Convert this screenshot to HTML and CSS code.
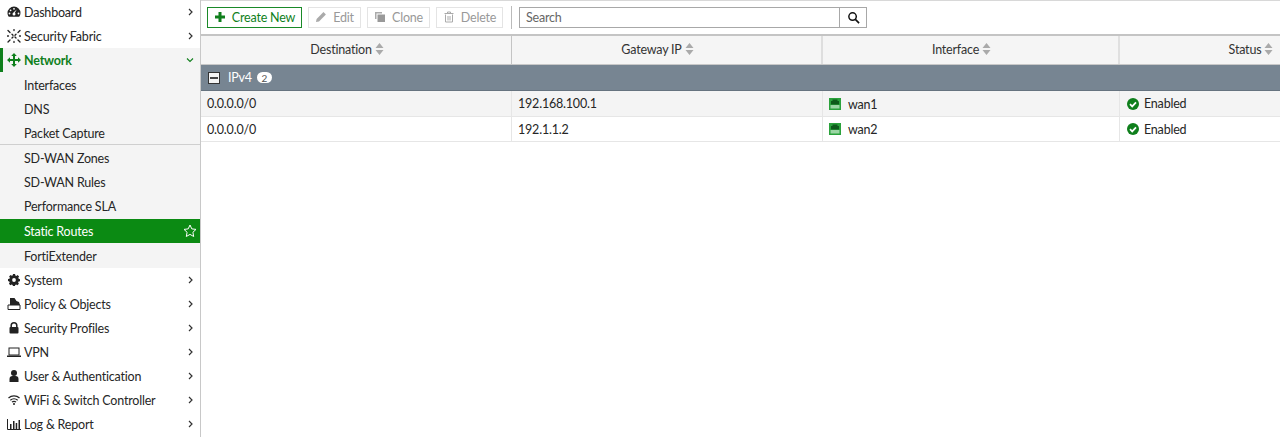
FILE: index.html
```html
<!DOCTYPE html>
<html lang="en">
<head>
<meta charset="utf-8">
<title>Static Routes</title>
<link rel="stylesheet" href="styles.css">
</head>
<body>
<div class="app">
  <nav class="side">
    <div class="item"><svg class="ic" viewBox="0 0 14 14"><path d="M7 1.500A6.500 6.500 0 0 0 .5 8c0 1.500.5 2.800 1.300 3.800h10.400A6.300 6.300 0 0 0 13.500 8 6.500 6.500 0 0 0 7 1.500z" fill="#222"/><circle cx="7" cy="3.800" r=".9" fill="#fff"/><circle cx="3.600" cy="5.300" r=".9" fill="#fff"/><circle cx="2.500" cy="8.500" r=".9" fill="#fff"/><circle cx="11.500" cy="8.500" r=".9" fill="#fff"/><path d="M9.800 4.500 7.600 8.200 6.400 7.600z" fill="#fff"/><circle cx="7" cy="9" r="1.500" fill="#fff"/></svg><span class="lbl">Dashboard</span><svg class="chev" viewBox="0 0 8 10"><path d="M3 2l3 3-3 3" fill="none" stroke="#333" stroke-width="1.200"/></svg></div>
    <div class="item"><svg class="ic" viewBox="0 0 14 14"><g stroke="#222" stroke-width="1.300" stroke-linecap="round"><path d="M1 1.500 3 3.500M5 5.300 6 6.300M8 8l1 1M11 11l2 2M13 1.500l-2 2M9 5.300 8 6.300M6 8 5 9M3 11l-2 2M7 .5v1M7 12.500v1M.5 7h1M12.500 7h1"/></g></svg><span class="lbl">Security Fabric</span><svg class="chev" viewBox="0 0 8 10"><path d="M3 2l3 3-3 3" fill="none" stroke="#333" stroke-width="1.200"/></svg></div>
    <div class="group">
      <div class="item open"><svg class="ic" viewBox="0 0 14 14"><path d="M7 0 9.800 3H8v3h3V4.200L14 7l-3 2.800V8H8v3h1.800L7 14l-2.800-3H6V8H3v1.800L0 7l3-2.800V6h3V3H4.200z" fill="#0f7f1c"/></svg><span class="lbl">Network</span><svg class="chev" viewBox="0 0 10 8"><path d="M2 2.500 5 5.500l3-3" fill="none" stroke="#0f7f1c" stroke-width="1.100"/></svg></div>
      <div class="sub">Interfaces</div>
      <div class="sub">DNS</div>
      <div class="sub">Packet Capture</div>
      <div class="rule"></div>
      <div class="sub">SD-WAN Zones</div>
      <div class="sub">SD-WAN Rules</div>
      <div class="sub">Performance SLA</div>
      <div class="sub active"><span class="lbl">Static Routes</span><svg class="star" viewBox="0 0 14 14"><path d="M7 1l1.800 3.900 4.200.5-3.100 2.900.8 4.200L7 10.400l-3.700 2.100.8-4.200L1 5.400l4.200-.5z" fill="none" stroke="#fff" stroke-width="1"/></svg></div>
      <div class="sub last">FortiExtender</div>
    </div>
    <div class="item"><svg class="ic sm" viewBox="0 0 14 14"><path d="M5.800 0h2.400l.4 1.700 1.100.5 1.500-.9 1.700 1.700-.9 1.500.5 1.100 1.500.4v2.400l-1.700.4-.5 1.100.9 1.500-1.700 1.700-1.500-.9-1.100.5-.4 1.700H5.800l-.4-1.700-1.100-.5-1.500.9-1.700-1.700.9-1.500-.5-1.100L0 8.200V5.800l1.700-.4.500-1.100-.9-1.500 1.700-1.700 1.500.9 1.100-.5z" fill="#222"/><circle cx="7" cy="7" r="2.200" fill="#fff"/></svg><span class="lbl">System</span><svg class="chev" viewBox="0 0 8 10"><path d="M3 2l3 3-3 3" fill="none" stroke="#333" stroke-width="1.200"/></svg></div>
    <div class="item"><svg class="ic" viewBox="0 0 14 14"><path d="M3 1h4.500l2 3 2.500 1 1 3H3z" fill="#222"/><path d="M1 8h12v4.500H1z" fill="#fff" stroke="#222" stroke-width="1"/></svg><span class="lbl">Policy &amp; Objects</span><svg class="chev" viewBox="0 0 8 10"><path d="M3 2l3 3-3 3" fill="none" stroke="#333" stroke-width="1.200"/></svg></div>
    <div class="item"><svg class="ic" viewBox="0 0 14 14"><path d="M4.200 6.500V4.500a2.800 2.800 0 0 1 5.600 0v2" fill="none" stroke="#222" stroke-width="1.500"/><rect x="2.500" y="6" width="9" height="6.500" rx="1" fill="#222"/></svg><span class="lbl">Security Profiles</span><svg class="chev" viewBox="0 0 8 10"><path d="M3 2l3 3-3 3" fill="none" stroke="#333" stroke-width="1.200"/></svg></div>
    <div class="item"><svg class="ic" viewBox="0 0 14 14"><rect x="2" y="3" width="10" height="7" fill="none" stroke="#222" stroke-width="1"/><path d="M0 10.500h14v1.500H0z" fill="#222"/></svg><span class="lbl">VPN</span><svg class="chev" viewBox="0 0 8 10"><path d="M3 2l3 3-3 3" fill="none" stroke="#333" stroke-width="1.200"/></svg></div>
    <div class="item"><svg class="ic" viewBox="0 0 14 14"><circle cx="7" cy="4" r="3" fill="#222"/><path d="M2.500 13V10a3 3 0 0 1 3-3h3a3 3 0 0 1 3 3v3z" fill="#222"/></svg><span class="lbl">User &amp; Authentication</span><svg class="chev" viewBox="0 0 8 10"><path d="M3 2l3 3-3 3" fill="none" stroke="#333" stroke-width="1.200"/></svg></div>
    <div class="item"><svg class="ic" viewBox="0 0 14 14"><g fill="none" stroke="#222" stroke-width="1.200"><path d="M1.500 5a8 8 0 0 1 11 0"/><path d="M3.300 7.200a5.500 5.500 0 0 1 7.400 0"/><path d="M5 9.200a2.800 2.800 0 0 1 4 0"/></g><circle cx="7" cy="11" r="1" fill="#222"/></svg><span class="lbl">WiFi &amp; Switch Controller</span><svg class="chev" viewBox="0 0 8 10"><path d="M3 2l3 3-3 3" fill="none" stroke="#333" stroke-width="1.200"/></svg></div>
    <div class="item"><svg class="ic" viewBox="0 0 14 14"><path d="M.5 2v10.500H14" fill="none" stroke="#222" stroke-width="1"/><path d="M3 7h1.500v5H3zM6 4h1.500v8H6zM8.700 6h1.500v6H8.700zM11.500 3H13v9h-1.500z" fill="#222"/></svg><span class="lbl">Log &amp; Report</span><svg class="chev" viewBox="0 0 8 10"><path d="M3 2l3 3-3 3" fill="none" stroke="#333" stroke-width="1.200"/></svg></div>
  </nav>
  <main class="main">
    <div class="toolbar">
      <button class="btn primary"><svg class="bi" viewBox="0 0 12 12"><path d="M4.500 1h3v3.500H11v3H7.500V11h-3V7.500H1v-3h3.500z" fill="#0f7f1c"/></svg>Create New</button>
      <button class="btn off edit"><svg class="bi" viewBox="0 0 12 12"><path d="M1 11l.6-3L8.500 1.100l2.400 2.400L4 10.400z" fill="#aaa"/></svg>Edit</button>
      <button class="btn off clone"><svg class="bi" viewBox="0 0 12 12"><path d="M1 1h7v1.500H2.500V8H1z" fill="#aaa"/><path d="M3.500 3.500H11V11H3.500z" fill="#999"/></svg>Clone</button>
      <button class="btn off del"><svg class="bi" viewBox="0 0 12 12"><path d="M1.500 2.500h9M4.500 2.500V1h3v1.500" fill="none" stroke="#aaa"/><path d="M2.500 3.500v7.500h7V3.500M5 5v4.500M7 5v4.500" fill="none" stroke="#aaa"/></svg>Delete</button>
      <span class="sep"></span>
      <div class="search"><span class="placeholder">Search</span><span class="go"><svg viewBox="0 0 14 14"><circle cx="6" cy="6" r="4" fill="none" stroke="#111" stroke-width="1.600"/><path d="M9 9l4 4" stroke="#111" stroke-width="1.800"/></svg></span></div>
    </div>
    <div class="table">
      <div class="row head">
        <div class="cell dark">Destination<svg class="sort" viewBox="0 0 8 12"><path d="M4 0l4 5H0zM4 12 0 7h8z" fill="#aaa"/></svg></div>
        <div class="cell">Gateway IP<svg class="sort" viewBox="0 0 8 12"><path d="M4 0l4 5H0zM4 12 0 7h8z" fill="#aaa"/></svg></div>
        <div class="cell">Interface<svg class="sort" viewBox="0 0 8 12"><path d="M4 0l4 5H0zM4 12 0 7h8z" fill="#aaa"/></svg></div>
        <div class="cell">Status<svg class="sort" viewBox="0 0 8 12"><path d="M4 0l4 5H0zM4 12 0 7h8z" fill="#aaa"/></svg></div>
      </div>
      <div class="grp"><span class="minus"><i></i></span><span class="grpname">IPv4</span><span class="count">2</span></div>
      <div class="row body shade">
        <div class="cell">0.0.0.0/0</div>
        <div class="cell">192.168.100.1</div>
        <div class="cell"><svg class="port" viewBox="0 0 12 12"><rect width="12" height="12" fill="#2ba23c"/><path d="M3.500 1.500h5V3H10v3.500H2V3h1.500z" fill="#0d5a1a"/><path d="M1.500 7h9v3.500h-9z" fill="#9bd6a4"/></svg><span class="portname">wan1</span></div>
        <div class="cell"><svg class="ok" viewBox="0 0 12 12"><circle cx="6" cy="6" r="6" fill="#0f7f1c"/><path d="M3 6.200 5.200 8.400 9 4.300" fill="none" stroke="#fff" stroke-width="1.700"/></svg>Enabled</div>
      </div>
      <div class="row body">
        <div class="cell">0.0.0.0/0</div>
        <div class="cell">192.1.1.2</div>
        <div class="cell"><svg class="port" viewBox="0 0 12 12"><rect width="12" height="12" fill="#2ba23c"/><path d="M3.500 1.500h5V3H10v3.500H2V3h1.500z" fill="#0d5a1a"/><path d="M1.500 7h9v3.500h-9z" fill="#9bd6a4"/></svg><span class="portname">wan2</span></div>
        <div class="cell"><svg class="ok" viewBox="0 0 12 12"><circle cx="6" cy="6" r="6" fill="#0f7f1c"/><path d="M3 6.200 5.200 8.400 9 4.300" fill="none" stroke="#fff" stroke-width="1.700"/></svg>Enabled</div>
      </div>
    </div>
  </main>
</div>
</body>
</html>
```

FILE: styles.css
```css
* { box-sizing: border-box; }
html, body { margin: 0; height: 100%; overflow: hidden; }
body { font-family: Lato, "Open Sans", sans-serif; font-size: 12.5px; letter-spacing: -0.2px; color: #262626; background: #fff; }
.app { display: flex; height: 437px; }

.side { width: 201px; flex: none; border-right: 1px solid #c8c8c8; overflow: hidden; }
.item { height: 24px; display: flex; align-items: center; padding-left: 7px; position: relative; }
.ic { width: 14px; height: 14px; flex: none; margin-right: 3px; }
.ic.sm { width: 12px; height: 12px; margin: 0 4px 0 1px; }
.lbl { flex: 1; }
.chev { width: 8px; height: 10px; margin-right: 6px; flex: none; }
.group { background: #f4f4f4; }
.open { color: #0f7f1c; font-weight: 700; box-shadow: inset 3px 0 0 #0f7f1c; }
.open .chev { width: 10px; height: 8px; margin-right: 5px; }
.sub { height: 24px; line-height: 22px; padding: 3px 0 0 24px; }
.sub.last { padding-top: 2px; }
.rule { height: 1px; background: #cfcfcf; }
.sub.active { height: 24px; margin: 2px 0 1px; padding-top: 1px; padding-right: 3px; line-height: 24px; background: #0b8a13; color: #fff; display: flex; align-items: center; }
.star { width: 14px; height: 14px; flex: none; margin-top: -1px; }

.main { flex: 1; min-width: 0; overflow: hidden; }
.toolbar { height: 36px; display: flex; align-items: center; padding: 0 0 1px 6px; border-top: 1px solid #d8d8d8; border-bottom: 2px solid #c4c4c4; }
.btn { height: 21px; padding: 0; margin: 0 6px 0 0; display: flex; align-items: center; justify-content: center; gap: 6px; font: inherit; letter-spacing: inherit; white-space: nowrap; background: #fff; border: 1px solid #e4e4e4; color: #999; }
.btn.primary { width: 95px; border-color: #1a8a28; color: #0f7f1c; margin-right: 6px; }
.btn.edit { width: 53px; }
.btn.clone { width: 63px; }
.btn.del { width: 67px; }
.bi { width: 12px; height: 12px; flex: none; }
.sep { width: 1px; height: 23px; background: #bbb; margin: 0 7px 0 2px; }
.search { width: 348px; height: 21px; border: 1px solid #a8a8a8; display: flex; align-items: center; }
.placeholder { flex: 1; padding-left: 6px; color: #666; }
.go { width: 27px; height: 100%; border-left: 1px solid #a8a8a8; display: flex; align-items: center; justify-content: center; }
.go svg { width: 13px; height: 13px; }

.table { width: 1201px; }
.row { display: grid; grid-template-columns: 311px 311px 297px 282px; }
.head { height: 29px; background: #f5f5f5; border-bottom: 1px solid #c8c8c8; }
.head .cell { display: flex; align-items: center; justify-content: center; padding: 0 18px 2px 0; border-right: 2px solid #e0e0e0; color: #333; }
.head .cell:nth-child(1) { border-right: 1px solid #c4c4c4; }
.head .cell:nth-child(2) { border-right: 2px solid #dedede; }
.sort { width: 9px; height: 12px; margin-left: 3px; flex: none; }
.grp { height: 26px; background: #778592; border-bottom: 1px solid #66737f; color: #fff; display: flex; align-items: center; padding-left: 7px; font-weight: 700; }
.minus { width: 12px; height: 12px; background: #f4f4f4; border: 1px solid #333; display: flex; align-items: center; justify-content: center; margin-right: 8px; }
.minus i { width: 8px; height: 2px; background: #444; }
.grpname { font-weight: 400; }
.count { width: 15px; height: 11px; border-radius: 6px; background: #fff; color: #555; font-size: 10px; font-weight: 400; display: flex; align-items: center; justify-content: center; margin-left: 5px; }
.body { height: 25px; border-bottom: 1px solid #e6e6e6; }
.body .cell { display: flex; align-items: center; padding-left: 6px; border-right: 1px solid #e6e6e6; }
.shade { height: 26px; background: #f4f4f4; }
.port { width: 12px; height: 12px; margin: 0 7px 0 0; flex: none; }
.portname { line-height: 16px; padding-top: 1px; }
.shade .portname { padding-top: 2px; }
.ok { width: 12px; height: 12px; margin: 0 5px 0 1px; flex: none; }
```
